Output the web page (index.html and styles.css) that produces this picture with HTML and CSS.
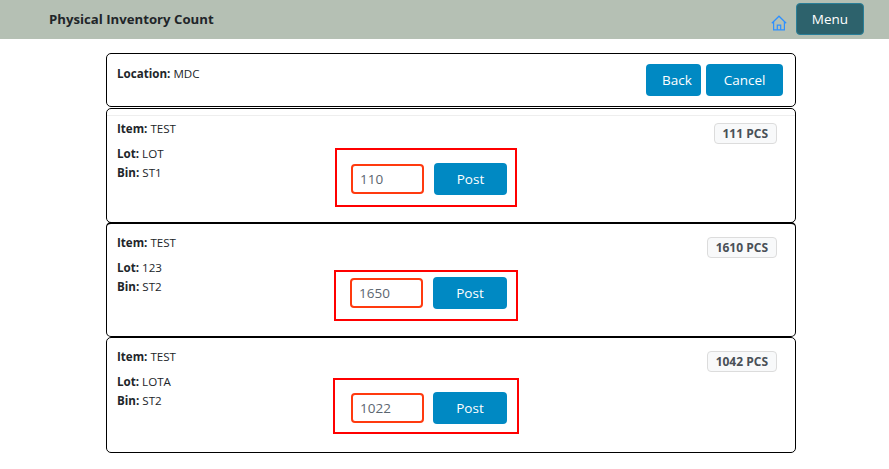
FILE: index.html
```html
<!DOCTYPE html>
<html lang="en">
<head>
    <meta charset="UTF-8">
    <meta name="viewport" content="width=device-width, initial-scale=1.0">
    <title>Physical Inventory Count</title>
    <link rel="stylesheet" href="styles.css">
</head>
<body>
    <header class="topbar">
        <div class="topbar-title">Physical Inventory Count</div>
        <svg class="home-icon" viewBox="0 0 16 16" width="16" height="16" fill="none" stroke="#2e90ff" stroke-width="1.2">
            <path d="M.8 8.2 8 1.2l7.2 7"/>
            <path d="M2.6 6.8v8h10.8v-8"/>
            <path d="M6.3 14.8v-4.6h3.4v4.6"/>
        </svg>
        <button class="menu-btn">Menu</button>
    </header>
    <main class="content">
        <section class="card card-location">
            <div class="line"><b>Location:</b> MDC</div>
            <div class="actions">
                <button class="btn btn-back">Back</button>
                <button class="btn btn-cancel">Cancel</button>
            </div>
        </section>
        <section class="card card-item card-first">
            <div class="info">
                <div class="line line-item"><b>Item:</b> TEST</div>
                <div class="line"><b>Lot:</b> LOT</div>
                <div class="line"><b>Bin:</b> ST1</div>
            </div>
            <div class="post-box box-a">
                <input class="qty" type="text" value="110">
                <button class="btn btn-post">Post</button>
            </div>
            <span class="badge">111 PCS</span>
        </section>
        <section class="card card-item card-middle">
            <div class="info">
                <div class="line line-item"><b>Item:</b> TEST</div>
                <div class="line"><b>Lot:</b> 123</div>
                <div class="line"><b>Bin:</b> ST2</div>
            </div>
            <div class="post-box box-b">
                <input class="qty" type="text" value="1650">
                <button class="btn btn-post">Post</button>
            </div>
            <span class="badge">1610 PCS</span>
        </section>
        <section class="card card-item card-last">
            <div class="info">
                <div class="line line-item"><b>Item:</b> TEST</div>
                <div class="line"><b>Lot:</b> LOTA</div>
                <div class="line"><b>Bin:</b> ST2</div>
            </div>
            <div class="post-box box-c">
                <input class="qty" type="text" value="1022">
                <button class="btn btn-post">Post</button>
            </div>
            <span class="badge">1042 PCS</span>
        </section>
    </main>
</body>
</html>
```

FILE: styles.css
```css
* { box-sizing: border-box; }
body {
    margin: 0;
    font-family: 'Open Sans', 'Noto Sans', sans-serif;
    font-size: 11.6px;
    color: #212529;
    background: #fff;
}
.topbar {
    height: 39px;
    background: #b5c0b4;
    display: flex;
    align-items: center;
    padding: 0 25px 0 49px;
}
.topbar-title {
    font-size: 13.2px;
    font-weight: 700;
    flex: 1;
    margin-top: -1px;
}
.home-icon {
    margin: 6px 9px 0 0;
}
.menu-btn {
    width: 68px;
    height: 32px;
    margin-top: -1px;
    background: #2d626c;
    color: #fff;
    border: 1px solid #2a7f98;
    border-radius: 4px;
    font-family: inherit;
    font-size: 13.5px;
}
.content {
    width: 690px;
    margin: 14px 0 0 106px;
}
.card {
    border: 1px solid #000;
    border-radius: 5px;
    display: flex;
    align-items: flex-start;
    background: #fff;
}
.card-location {
    height: 54px;
    margin-bottom: 1px;
    padding: 10px 12px 0 10px;
    justify-content: space-between;
}
.card-item {
    height: 115px;
    padding: 9px 18px 0 10px;
}
.card-first {
    padding-top: 10px;
    background: linear-gradient(#eee, #eee) 0 6px / 100% 1px no-repeat;
}
.card-middle {
    margin-top: -1px;
    border-top-width: 2px;
}
.card-last {
    height: 116px;
}
.line {
    line-height: 19px;
    white-space: nowrap;
}
.line b { font-weight: 700; }
.line-item { line-height: 20px; margin-bottom: 5px; }
.info { width: 218px; flex: none; }
.actions {
    display: flex;
    gap: 5px;
}
.btn {
    height: 32px;
    background: #0089c3;
    color: #fff;
    border: none;
    border-radius: 4px;
    font-family: inherit;
    font-size: 13.5px;
}
.btn-back { width: 55px; padding: 0 0 0 7px; }
.btn-cancel { width: 77px; }
.btn-post { width: 74px; margin-left: 9px; }
.post-box {
    border: 2px solid #f00;
    display: flex;
    align-items: center;
    flex: none;
}
.box-a { width: 182px; height: 59px; margin-top: 29px; padding: 2px 0 0 14px; }
.box-a .btn-post { width: 73px; margin-left: 10px; }
.box-b { width: 184px; height: 51px; margin-top: 37px; margin-left: -1px; padding: 0 0 5px 14px; }
.box-b .btn-post { width: 74px; margin-left: 10px; }
.box-c { width: 186px; height: 56px; margin-top: 31px; margin-left: -2px; padding: 4px 0 0 16px; }
.qty {
    width: 73px;
    height: 30px;
    border: 2px solid #ff3a0f;
    border-radius: 4px;
    padding: 0 7px;
    font-family: inherit;
    font-size: 13.5px;
    color: #5c6670;
    outline: none;
}
.badge {
    margin-left: auto;
    margin-top: 4px;
    height: 21px;
    line-height: 19px;
    padding: 0 8px;
    background: #f8f9fa;
    border: 1px solid #dcdcdc;
    border-radius: 4px;
    font-size: 12px;
    font-weight: 700;
    color: #495057;
}
```
